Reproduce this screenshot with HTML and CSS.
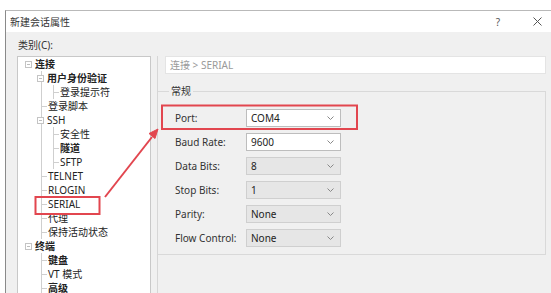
FILE: index.html
```html
<!DOCTYPE html>
<html>
<head>
<meta charset="utf-8">
<link rel="stylesheet" href="styles.css">
</head>
<body>
<div class="window">
  <div class="titlebar">
    <span class="title">新建会话属性</span>
    <span class="tb-btns">
      <span class="help">?</span>
      <svg class="close" width="9" height="9" viewBox="0 0 9 9"><path d="M0.5 0.5L8.5 8.5M8.5 0.5L0.5 8.5" stroke="#555" stroke-width="1"/></svg>
    </span>
  </div>
  <div class="content">
    <div class="cat-label">类别(C):</div>
    <div class="main">
      <div class="tree">
        <div class="node">
          <div class="row bold"><i class="box"></i>连接</div>
          <div class="children c1">
            <div class="node">
              <div class="row bold"><i class="box"></i>用户身份验证</div>
              <div class="children c2">
                <div class="row leaf"><i class="conn"></i>登录提示符</div>
              </div>
            </div>
            <div class="row leaf"><i class="conn"></i>登录脚本</div>
            <div class="node">
              <div class="row"><i class="box"></i>SSH</div>
              <div class="children c2">
                <div class="row leaf"><i class="conn"></i>安全性</div>
                <div class="row leaf bold"><i class="conn"></i>隧道</div>
                <div class="row leaf"><i class="conn"></i>SFTP</div>
              </div>
            </div>
            <div class="row leaf"><i class="conn"></i>TELNET</div>
            <div class="row leaf"><i class="conn"></i>RLOGIN</div>
            <div class="row leaf"><i class="conn"></i>SERIAL</div>
            <div class="row leaf"><i class="conn"></i>代理</div>
            <div class="row leaf"><i class="conn"></i>保持活动状态</div>
          </div>
        </div>
        <div class="node">
          <div class="row bold"><i class="box"></i>终端</div>
          <div class="children c1">
            <div class="row leaf bold"><i class="conn"></i>键盘</div>
            <div class="row leaf"><i class="conn"></i>VT 模式</div>
            <div class="row leaf bold"><i class="conn"></i>高级</div>
          </div>
        </div>
      </div>
      <div class="panel">
        <div class="crumb">连接 &gt; SERIAL</div>
        <fieldset class="group">
          <legend>常规</legend>
          <div class="fields">
            <div class="field"><span class="lbl">Port:</span><span class="sel white">COM4<svg class="chev" width="7" height="4" viewBox="0 0 7 4"><path d="M0.5 0.5L3.5 3.5L6.5 0.5" fill="none" stroke="#888"/></svg></span></div>
            <div class="field"><span class="lbl">Baud Rate:</span><span class="sel white">9600<svg class="chev" width="7" height="4" viewBox="0 0 7 4"><path d="M0.5 0.5L3.5 3.5L6.5 0.5" fill="none" stroke="#888"/></svg></span></div>
            <div class="field"><span class="lbl">Data Bits:</span><span class="sel">8<svg class="chev" width="7" height="4" viewBox="0 0 7 4"><path d="M0.5 0.5L3.5 3.5L6.5 0.5" fill="none" stroke="#888"/></svg></span></div>
            <div class="field"><span class="lbl">Stop Bits:</span><span class="sel">1<svg class="chev" width="7" height="4" viewBox="0 0 7 4"><path d="M0.5 0.5L3.5 3.5L6.5 0.5" fill="none" stroke="#888"/></svg></span></div>
            <div class="field"><span class="lbl">Parity:</span><span class="sel">None<svg class="chev" width="7" height="4" viewBox="0 0 7 4"><path d="M0.5 0.5L3.5 3.5L6.5 0.5" fill="none" stroke="#888"/></svg></span></div>
            <div class="field"><span class="lbl">Flow Control:</span><span class="sel">None<svg class="chev" width="7" height="4" viewBox="0 0 7 4"><path d="M0.5 0.5L3.5 3.5L6.5 0.5" fill="none" stroke="#888"/></svg></span></div>
          </div>
        </fieldset>
      </div>
    </div>
  </div>
</div>
<svg class="annot" width="551" height="293" viewBox="0 0 551 293">
  <rect x="162" y="105.5" width="195" height="23.5" fill="none" stroke="#e2464f" stroke-width="2"/>
  <rect x="35.5" y="197" width="64" height="17" fill="none" stroke="#e2464f" stroke-width="2"/>
  <line x1="105" y1="197" x2="152" y2="137" stroke="#e2464f" stroke-width="2"/>
  <path d="M158 129 L149 133.5 L155 138.5 Z" fill="#e2464f" stroke="#e2464f" stroke-width="1"/>
</svg>
</body>
</html>
```
FILE: styles.css
```css
html, body {
  margin: 0;
  padding: 0;
  width: 551px;
  height: 293px;
  overflow: hidden;
  background: #ffffff;
  font-family: "Noto Sans", "Noto Sans CJK SC", sans-serif;
  font-size: 10px;
  color: #222;
}
body { position: relative; }

.window {
  margin: 10px 0 0 5px;
  height: 283px;
  border-top: 1px solid #b9b9b9;
  border-left: 1px solid #8a8a8a;
  background: #f0f0f0;
  display: flex;
  flex-direction: column;
}

.titlebar {
  height: 21px;
  background: #ffffff;
  display: flex;
  align-items: center;
  justify-content: space-between;
  padding-left: 4px;
  flex: none;
}
.title { font-size: 10px; color: #333; }
.tb-btns { display: flex; align-items: center; }
.help { font-size: 10px; color: #555; margin-right: 33px; }
.close { margin-right: 9px; }

.content {
  flex: 1;
  padding: 6px 0 0 12px;
  display: flex;
  flex-direction: column;
  min-height: 0;
}
.cat-label { height: 14px; line-height: 14px; color: #333; }

.main {
  margin-top: 4px;
  display: flex;
  flex: 1;
  min-height: 0;
}

.tree {
  margin-left: -1px;
  background: #fff;
  border: 1px solid #c8c8c8;
  border-bottom: none;
  padding-left: 7px;
  box-sizing: border-box;
  width: 134px;
  flex: none;
  overflow: hidden;
}
.row {
  height: 14px;
  line-height: 14px;
  display: flex;
  align-items: center;
  white-space: nowrap;
  color: #222;
}
.bold { font-weight: bold; }
.box {
  width: 7px;
  height: 7px;
  box-sizing: border-box;
  border: 1px solid #c4c4c4;
  background: #fff linear-gradient(#bdbdbd, #bdbdbd) no-repeat center / 3px 1px;
  margin-right: 3px;
  flex: none;
  position: relative;
}
.children { border-left: 1px solid #cfcfcf; }
.c1 { margin-left: 16px; }
.c2 { margin-left: 11px; }
.children > .node > .row > .box { margin-left: -5px; }
.conn {
  width: 5px;
  height: 1px;
  background: #cfcfcf;
  margin-right: 1px;
  flex: none;
}

.panel {
  margin-left: 6px;
  width: 388px;
  flex: none;
  border-left: 1px solid #d6d6d6;
  display: flex;
  flex-direction: column;
}
.crumb {
  margin-left: 7px;
  height: 18px;
  line-height: 17px;
  box-sizing: border-box;
  background: #fff;
  border: 1px solid #e4e4e4;
  padding-left: 4px;
  color: #9a9a9a;
}

.group {
  margin: 12px 0 0 0;
  padding: 0;
  border: 1px solid #d9d9d9;
  border-left: none;
  min-width: 0;
}
.group legend {
  margin-left: 11px;
  padding: 0 2px;
  line-height: 10px;
  color: #333;
}
.fields {
  padding: 13px 0 7px 17px;
  display: flex;
  flex-direction: column;
  gap: 6px;
}
.field {
  display: flex;
  align-items: center;
  height: 18px;
}
.lbl { width: 71px; flex: none; color: #333; }
.sel {
  width: 95px;
  height: 18px;
  box-sizing: border-box;
  border: 1px solid #cfcfcf;
  background: #e6e6e6;
  display: flex;
  align-items: center;
  justify-content: space-between;
  padding: 0 6px 0 4px;
  color: #222;
}
.sel.white { background: #fff; border-color: #bdbdbd; }

.annot {
  position: absolute;
  left: 0;
  top: 0;
  pointer-events: none;
}
```
